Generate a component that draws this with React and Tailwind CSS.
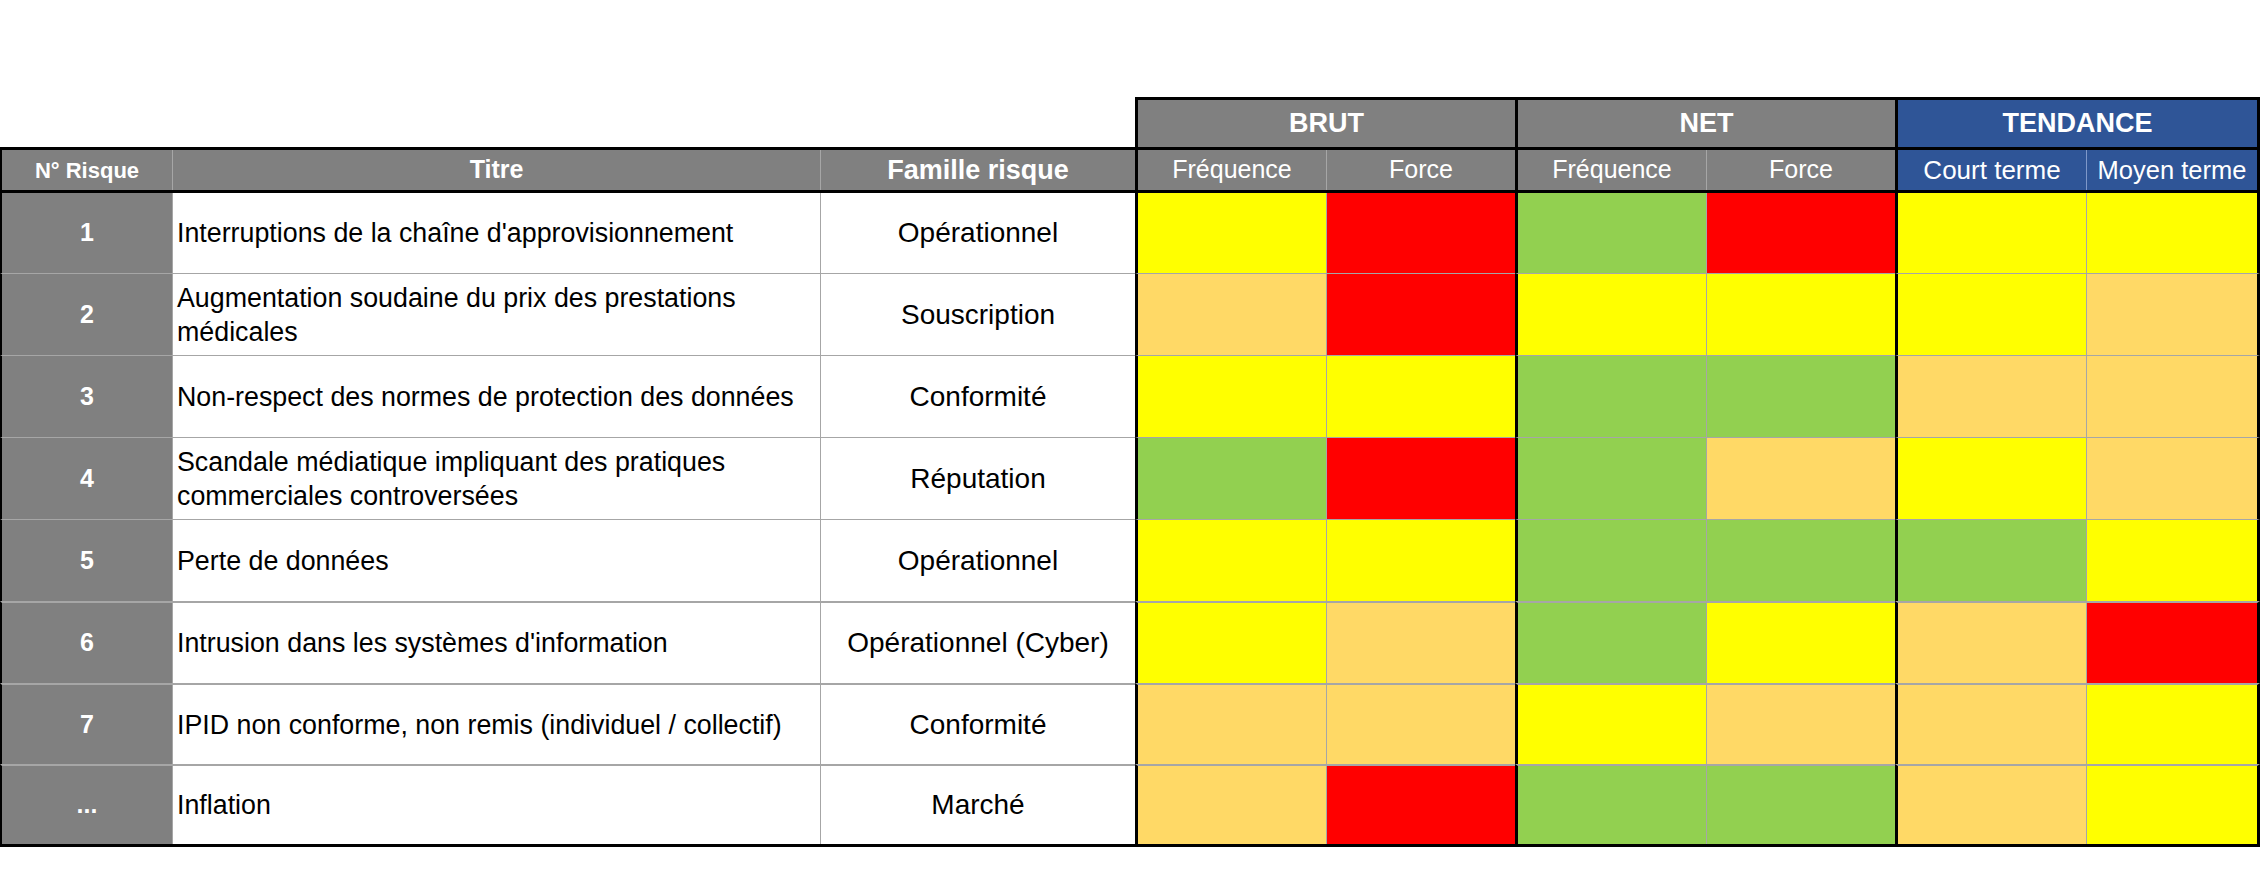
import React from "react";

const COL = {
  Y: "bg-[#ffff00]",
  R: "bg-[#ff0000]",
  G: "bg-[#92d050]",
  O: "bg-[#ffd966]",
};

const rows = [
  { n: "1", t: ["Interruptions de la chaîne d'approvisionnement"], f: "Opérationnel", c: "YRGRYY", h: "h-[80px]", bt: "" },
  { n: "2", t: ["Augmentation soudaine du prix des prestations", "médicales"], f: "Souscription", c: "ORYYYO", h: "h-[82px]", bt: "border-t border-t-[#a6a6a6]" },
  { n: "3", t: ["Non-respect des normes de protection des données"], f: "Conformité", c: "YYGGOO", h: "h-[82px]", bt: "border-t border-t-[#a6a6a6]" },
  { n: "4", t: ["Scandale médiatique impliquant des pratiques", "commerciales controversées"], f: "Réputation", c: "GRGOYO", h: "h-[82px]", bt: "border-t border-t-[#a6a6a6]" },
  { n: "5", t: ["Perte de données"], f: "Opérationnel", c: "YYGGGY", h: "h-[82px]", bt: "border-t border-t-[#a6a6a6]" },
  { n: "6", t: ["Intrusion dans les systèmes d'information"], f: "Opérationnel (Cyber)", c: "YOGYOR", h: "h-[82px]", bt: "border-t-2 border-t-[#a6a6a6]" },
  { n: "7", t: ["IPID non conforme, non remis (individuel / collectif)"], f: "Conformité", c: "OOYOOY", h: "h-[81px]", bt: "border-t-2 border-t-[#a6a6a6]" },
  { n: "...", t: ["Inflation"], f: "Marché", c: "ORGGOY", h: "h-[80px]", bt: "border-t-2 border-t-[#a6a6a6]" },
];

const dataW = [
  "w-[192px] border-l-[3px] border-l-black border-r border-r-[#a6a6a6]",
  "w-[188px]",
  "w-[192px] border-l-[3px] border-l-black border-r border-r-[#a6a6a6]",
  "w-[188px]",
  "w-[192px] border-l-[3px] border-l-black border-r border-r-[#a6a6a6]",
  "w-[173px] border-r-[3px] border-r-black",
];

export default function App() {
  return (
    <div
      className="w-[2260px] h-[888px] bg-white pt-[97px]"
      style={{ fontFamily: "'Liberation Sans', Arial, sans-serif" }}
    >
      {/* group header */}
      <div className="flex h-[50px]">
        <div className="w-[1135px]" />
        <div className="w-[380px] border-t-[3px] border-l-[3px] border-black bg-[#808080] text-white text-[27px] font-bold flex items-center justify-center">
          BRUT
        </div>
        <div className="w-[380px] border-t-[3px] border-l-[3px] border-black bg-[#808080] text-white text-[27px] font-bold flex items-center justify-center">
          NET
        </div>
        <div className="w-[365px] border-t-[3px] border-l-[3px] border-r-[3px] border-black bg-[#2f5597] text-white text-[27px] font-bold flex items-center justify-center">
          TENDANCE
        </div>
      </div>

      <div className="border-b-[3px] border-black">
        {/* sub header */}
        <div className="flex h-[46px] border-t-[3px] border-b-[3px] border-black text-white">
          <div className="w-[173px] border-l-2 border-l-black border-r border-r-[#a6a6a6] bg-[#808080] text-[22px] font-bold flex items-center justify-center">
            N° Risque
          </div>
          <div className="w-[648px] border-r border-r-[#a6a6a6] bg-[#808080] text-[25px] font-bold flex items-center justify-center">
            Titre
          </div>
          <div className="w-[314px] bg-[#808080] text-[27px] font-bold flex items-center justify-center">
            Famille risque
          </div>
          <div className="w-[192px] border-l-[3px] border-l-black border-r border-r-[#a6a6a6] bg-[#808080] text-[25px] flex items-center justify-center">
            Fréquence
          </div>
          <div className="w-[188px] bg-[#808080] text-[25px] flex items-center justify-center">
            Force
          </div>
          <div className="w-[192px] border-l-[3px] border-l-black border-r border-r-[#a6a6a6] bg-[#808080] text-[25px] flex items-center justify-center">
            Fréquence
          </div>
          <div className="w-[188px] bg-[#808080] text-[25px] flex items-center justify-center">
            Force
          </div>
          <div className="w-[192px] border-l-[3px] border-l-black border-r border-r-[#7f98c9] bg-[#2f5597] text-[26px] flex items-center justify-center">
            Court terme
          </div>
          <div className="w-[173px] border-r-[3px] border-r-black bg-[#2f5597] text-[25.5px] flex items-center justify-center">
            Moyen terme
          </div>
        </div>

        {/* data rows */}
        {rows.map((r, i) => (
          <div key={i} className={`flex ${r.h}`}>
            <div className={`w-[173px] border-l-2 border-l-black border-r border-r-[#a6a6a6] ${r.bt} bg-[#808080] text-white font-bold text-[25px] flex items-center justify-center`}>
              {r.n}
            </div>
            <div className={`w-[648px] border-r border-r-[#a6a6a6] ${r.bt} bg-white text-black text-[26.8px] leading-[34px] pl-[4px] flex flex-col justify-center`}>
              {r.t.map((line, k) => (
                <div key={k} className="whitespace-nowrap">{line}</div>
              ))}
            </div>
            <div className={`w-[314px] ${r.bt} bg-white text-black text-[28px] flex items-center justify-center whitespace-nowrap`}>
              {r.f}
            </div>
            {r.c.split("").map((c, k) => (
              <div key={k} className={`${dataW[k]} ${r.bt} ${COL[c]}`} />
            ))}
          </div>
        ))}
      </div>
    </div>
  );
}
